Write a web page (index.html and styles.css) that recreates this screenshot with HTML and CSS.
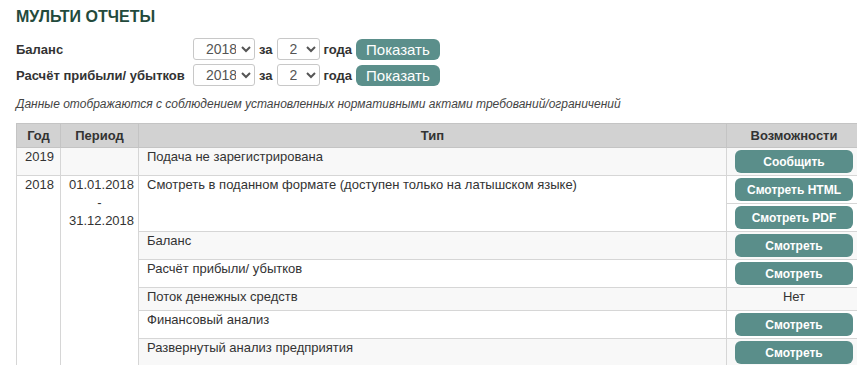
FILE: index.html
```html
<!DOCTYPE html>
<html lang="ru">
<head>
  <meta charset="UTF-8">
  <title>Мульти отчеты</title>
  <link rel="stylesheet" href="styles.css">
</head>
<body>

<div class="page">
  <h1>МУЛЬТИ ОТЧЕТЫ</h1>

  <!-- Выбор отчетов -->
  <div class="filter">
    <label class="filter-label">Баланс</label>
    <select class="sel sel-year"><option>2018</option></select>
    <span class="filter-text">за</span>
    <select class="sel sel-count"><option>2</option></select>
    <span class="filter-text">года</span>
    <button class="show-btn">Показать</button>
  </div>
  <div class="filter">
    <label class="filter-label">Расчёт прибыли/ убытков</label>
    <select class="sel sel-year"><option>2018</option></select>
    <span class="filter-text">за</span>
    <select class="sel sel-count"><option>2</option></select>
    <span class="filter-text">года</span>
    <button class="show-btn">Показать</button>
  </div>

  <p class="note">Данные отображаются с соблюдением установленных нормативными актами требований/ограничений</p>

  <table class="reports">
    <thead>
      <tr>
        <th class="col-year">Год</th>
        <th class="col-period">Период</th>
        <th class="col-type">Тип</th>
        <th class="col-act">Возможности</th>
      </tr>
    </thead>
    <tbody>
      <tr class="grey">
        <td class="center">2019</td>
        <td></td>
        <td>Подача не зарегистрирована</td>
        <td class="act"><button class="act-btn">Сообщить</button></td>
      </tr>
      <tr>
        <td class="center white" rowspan="8">2018</td>
        <td class="center white" rowspan="8">01.01.2018<br>-<br>31.12.2018</td>
        <td rowspan="2">Смотреть в поданном формате (доступен только на латышском языке)</td>
        <td class="act"><button class="act-btn">Смотреть HTML</button></td>
      </tr>
      <tr>
        <td class="act"><button class="act-btn">Смотреть PDF</button></td>
      </tr>
      <tr class="grey">
        <td>Баланс</td>
        <td class="act"><button class="act-btn">Смотреть</button></td>
      </tr>
      <tr>
        <td>Расчёт прибыли/ убытков</td>
        <td class="act"><button class="act-btn">Смотреть</button></td>
      </tr>
      <tr class="grey">
        <td>Поток денежных средств</td>
        <td class="center">Нет</td>
      </tr>
      <tr>
        <td>Финансовый анализ</td>
        <td class="act"><button class="act-btn">Смотреть</button></td>
      </tr>
      <tr class="grey">
        <td>Развернутый анализ предприятия</td>
        <td class="act"><button class="act-btn">Смотреть</button></td>
      </tr>
    </tbody>
  </table>
</div>

</body>
</html>
```

FILE: styles.css
```css
html {
  overflow: hidden;
}

body {
  margin: 0;
  font-family: "Liberation Sans", Arial, sans-serif;
  color: #333;
  background: #fff;
}

.page {
  padding: 6px 0 0 16px;
}

h1 {
  margin: 0 0 10px;
  font-size: 16px;
  line-height: 22px;
  font-weight: bold;
  color: #234a3c;
}

/* Строки выбора */
.filter {
  display: flex;
  align-items: center;
  height: 22px;
  margin-bottom: 4px;
}

.filter-label {
  width: 177px;
  font-size: 13px;
  font-weight: bold;
  color: #333;
}

.filter-text {
  font-size: 13px;
  font-weight: bold;
  margin: 0 4px;
}

.sel {
  height: 22px;
  font-family: inherit;
  font-size: 14px;
  color: #555;
  border: 1px solid #c8c8c8;
  border-radius: 3px;
  background: #fff;
  padding: 0 2px 0 8px;
}

.sel-year {
  width: 62px;
}

.sel-count {
  width: 43px;
}

.show-btn {
  height: 21px;
  padding: 0 10px;
  border: none;
  border-radius: 6px;
  background-color: #5b8f8b;
  color: #fff;
  font-family: inherit;
  font-size: 15px;
  line-height: 21px;
}

.note {
  margin: 10px 0 11px;
  font-size: 12px;
  line-height: 16px;
  font-style: italic;
  color: #444;
}

/* Таблица отчетов */
.reports {
  width: 846px;
  border-collapse: collapse;
  table-layout: fixed;
  font-size: 13px;
  color: #333;
}

.reports th {
  background-color: #d2d2d2;
  border: 1px solid #c4c4c4;
  padding: 3px 8px 2px;
  line-height: 18px;
  font-weight: bold;
  text-align: center;
}

.reports td {
  border: 1px solid #d6d6d6;
  padding: 0 8px 4px;
  line-height: 18px;
  vertical-align: top;
  text-align: left;
}

.col-year {
  width: 27px;
}

.col-period {
  width: 61px;
}

.col-act {
  width: 118px;
}

.reports tr.grey td {
  background-color: #f8f8f8;
}

.reports td.white {
  background-color: #fff;
}

.reports td.center {
  text-align: center;
}

.reports td.act {
  padding: 2px 8px;
}

.act-btn {
  display: block;
  width: 100%;
  height: 23px;
  border: none;
  border-radius: 6px;
  background-color: #5a8e8a;
  color: #fff;
  font-family: inherit;
  font-size: 12px;
  font-weight: bold;
  cursor: pointer;
}
```
